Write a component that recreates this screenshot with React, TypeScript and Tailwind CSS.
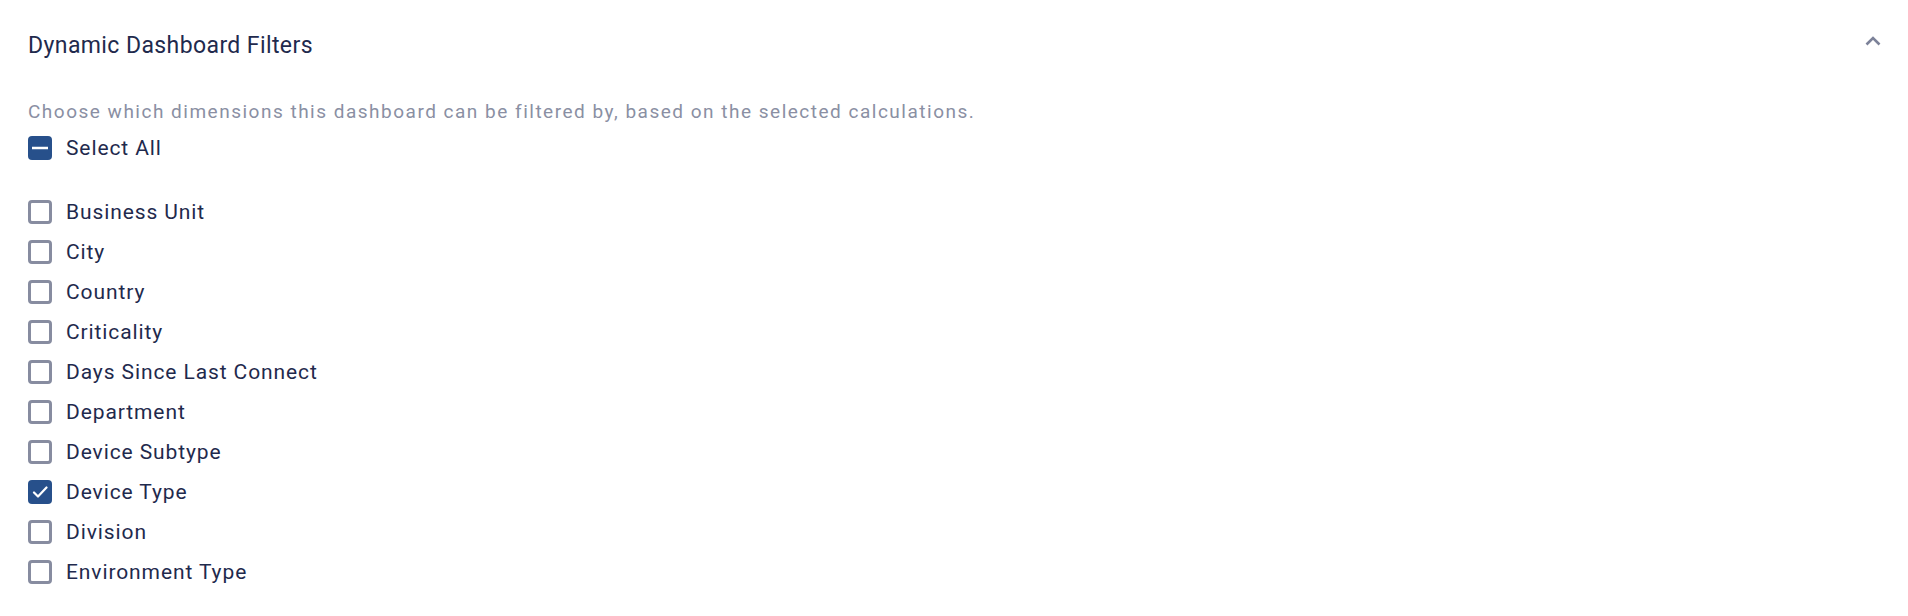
const options = [
  { label: 'Business Unit', checked: false },
  { label: 'City', checked: false },
  { label: 'Country', checked: false },
  { label: 'Criticality', checked: false },
  { label: 'Days Since Last Connect', checked: false },
  { label: 'Department', checked: false },
  { label: 'Device Subtype', checked: false },
  { label: 'Device Type', checked: true },
  { label: 'Division', checked: false },
  { label: 'Environment Type', checked: false },
];

function Box({ state }: { state: 'on' | 'off' | 'mixed' }) {
  if (state === 'off') {
    return <span className="block h-6 w-6 shrink-0 rounded-[4px] border-[3px] border-[#878ca0] bg-white" />;
  }
  return (
    <span className="flex h-6 w-6 shrink-0 items-center justify-center rounded-[4px] bg-[#27508b]">
      {state === 'mixed' ? (
        <svg width="18" height="4" viewBox="0 0 18 4">
          <line x1="1" y1="2" x2="17" y2="2" stroke="white" strokeWidth="2.5" />
        </svg>
      ) : (
        <svg width="16" height="14" viewBox="0 0 16 14">
          <polyline points="2,7.5 6,11.5 14.5,2.5" fill="none" stroke="white" strokeWidth="2.2" strokeLinecap="round" strokeLinejoin="round" />
        </svg>
      )}
    </span>
  );
}

function Row({ label, state }: { label: string; state: 'on' | 'off' | 'mixed' }) {
  return (
    <label className="flex h-10 items-center gap-[14px] cursor-pointer">
      <Box state={state} />
      <span className="text-[21px] leading-6 tracking-[0.9px] text-[#1f2a4d]">{label}</span>
    </label>
  );
}

export default function App() {
  return (
    <div className="min-h-[616px] bg-white px-7 pt-8 pb-6 font-['Roboto',sans-serif]">
      <div className="flex items-start justify-between">
        <h2 className="text-[23px] leading-7 font-normal tracking-[0.4px] text-[#1f2a4d]">Dynamic Dashboard Filters</h2>
        <button type="button" className="-mt-[3px] -mr-[5px] flex h-6 w-6 items-center justify-center">
          <svg width="16" height="10" viewBox="0 0 16 10">
            <polyline points="1.5,8.5 8,2 14.5,8.5" fill="none" stroke="#7c8299" strokeWidth="2.6" />
          </svg>
        </button>
      </div>
      <p className="mt-10 text-[19px] leading-6 tracking-[1.5px] text-[#8a8fa3]">
        Choose which dimensions this dashboard can be filtered by, based on the selected calculations.
      </p>
      <div className="mt-1">
        <Row label="Select All" state="mixed" />
      </div>
      <div className="mt-6 flex flex-col">
        {options.map((o) => (
          <Row key={o.label} label={o.label} state={o.checked ? 'on' : 'off'} />
        ))}
      </div>
    </div>
  );
}
